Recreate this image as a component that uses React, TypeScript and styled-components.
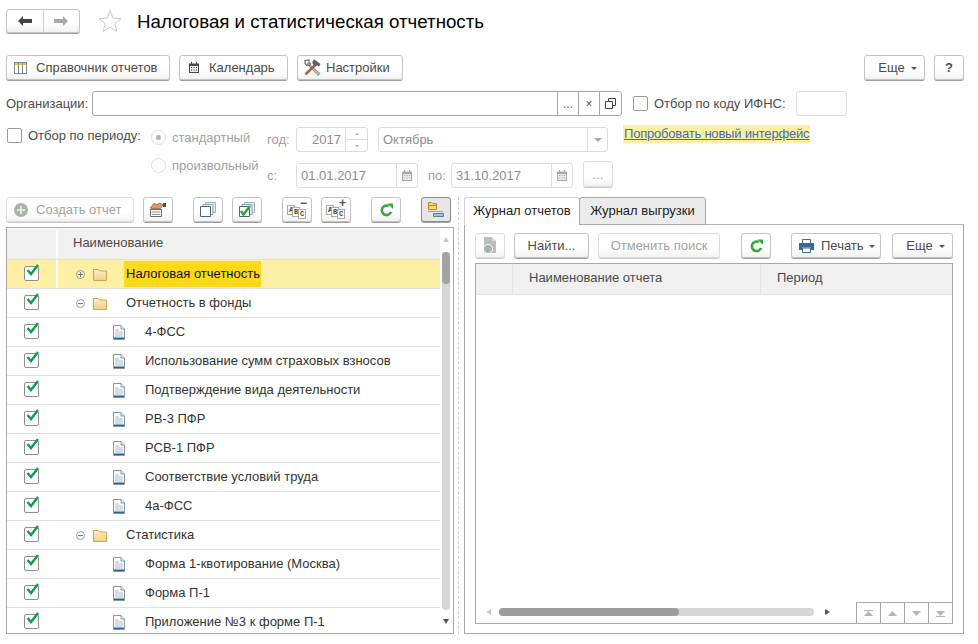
import React from 'react'
import styled, { createGlobalStyle, css } from 'styled-components'

const GlobalStyle = createGlobalStyle`
  html, body {
    margin: 0;
    padding: 0;
    background: #ffffff;
    overflow: hidden;
  }
  body {
    font-family: 'Liberation Sans', Arial, sans-serif;
    font-size: 13px;
    color: #4b4b4b;
  }
`

const colors = {
  border: '#a8a8a8',
  disabledBorder: '#dcdcdc',
  head: '#f0f0f0',
  line: '#e2e2e2',
  disabledText: '#a3a3a3',
  highlight: '#fdf0a4',
  link: '#3f6fae',
}

const ArrowIcon = ({ dir, color }: { dir: 'left' | 'right'; color: string }) => (
  <svg width='14' height='10' viewBox='0 0 14 10'>
    <path d={dir === 'left' ? 'M0 5l5-5v3h9v4H5v3z' : 'M14 5L9 0v3H0v4h9v3z'} fill={color} />
  </svg>
)

const StarIcon = () => (
  <svg width='24' height='24' viewBox='0 0 24 24'>
    <path
      d='M12 1.5l3 7.6 8 .5-6.200 5.100 2 7.800L12 18.200 5.200 22.500l2-7.800L1 9.600l8-.5z'
      fill='#fff'
      stroke='#c9c9c9'
    />
  </svg>
)

const TableIcon = () => (
  <svg width='13' height='12' viewBox='0 0 13 12'>
    <rect x='.5' y='.5' width='12' height='11' fill='#fff' stroke='#7d8c96' />
    <rect x='1' y='1' width='11' height='2' fill='#f2c230' />
    <path d='M4.500 1v10M8.500 1v10' stroke='#7d8c96' />
  </svg>
)

const CalendarIcon = ({ color = '#4a4a4a' }: { color?: string }) => (
  <svg width='10' height='11' viewBox='0 0 10 11'>
    <path d='M0 1.500h10V11H0z' fill={color} />
    <path d='M2 0h1v2H2zM7 0h1v2H7z' fill={color} />
    <path d='M1 4h8v6H1z' fill='#e8e8e8' />
    <path d='M2 5h1v1H2zM4.500 5h1v1h-1zM7 5h1v1H7zM2 7.500h1v1H2zM4.500 7.500h1v1h-1zM7 7.500h1v1H7z' fill={color} />
  </svg>
)

const ToolsIcon = () => (
  <svg width='17' height='17' viewBox='0 0 17 17'>
    <path d='M4 4l12 10.500-2 2L3 5z' fill='#b5b5b5' stroke='#666' strokeWidth='.6' />
    <path d='M11 4.500L1 14.500 2.500 16 12.500 6z' fill='#b0662a' stroke='#6a4420' strokeWidth='.5' />
    <path d='M8.500 2l2-1.500 6 4.500-1.500 2.500-2-1-1.500 1-3-3z' fill='#5f5f5f' />
    <path d='M1 1.500v3l2 2h2.500l1-1.500-1.500-1V1z' fill='none' stroke='#6f6f6f' strokeWidth='1.200' />
  </svg>
)

const CreateIcon = () => (
  <svg width='14' height='14' viewBox='0 0 14 14'>
    <circle cx='7' cy='7' r='7' fill='#a9b5a9' />
    <path d='M6 3h2v3h3v2H8v3H6V8H3V6h3z' fill='#dfe5df' />
  </svg>
)

const HandshakeDocIcon = () => (
  <svg width='16' height='15' viewBox='0 0 16 15'>
    <path d='M.5 7.500h11v7H.5z' fill='#fff' stroke='#6b6b6b' />
    <path d='M2 10h8M2 12.500h8' stroke='#8a8a8a' />
    <path d='M0 6l4-4.500 3 1 3-1.500 3 2-2.500 3.500H2z' fill='#d89a62' stroke='#8a5a30' strokeWidth='.7' />
    <path d='M13 1h3v4h-3z' fill='#4f4f4f' />
  </svg>
)

const StackIcon = ({ checked }: { checked?: boolean }) => (
  <svg width='16' height='15' viewBox='0 0 16 15'>
    <path d='M5.500.5h10v10h-10z' fill='#e6ebef' stroke='#9fb0bc' />
    <path d='M3 2.500h10v10H3z' fill='#eef1f4' stroke='#8fa2b0' />
    <path d='M.5 4.500h10v10H.5z' fill='#fff' stroke='#48667e' />
    {checked && <path d='M2 9l2.500 3.500L11 4' fill='none' stroke='#2fa83c' strokeWidth='2.600' />}
  </svg>
)

const AbcText = styled.span<{ $left: number; $top: number }>`
  position: absolute;
  left: ${(p) => p.$left}px;
  top: ${(p) => p.$top}px;
  font-family: 'Liberation Mono', monospace;
  font-size: 7px;
  font-weight: bold;
  line-height: 8px;
  color: #444;
  background: #fff;
  border: 1px solid #aaa;
  padding: 0 1px;
`
const AbcBox = styled.span`
  position: relative;
  display: block;
  width: 20px;
  height: 20px;
`
const AbcSign = styled.span`
  position: absolute;
  right: 0;
  top: -2px;
  font-size: 12px;
  line-height: 10px;
  font-weight: bold;
  color: #555;
`
const AbcIcon = ({ sign }: { sign: string }) => (
  <AbcBox>
    <AbcText $left={0} $top={5}>
      A
    </AbcText>
    <AbcText $left={5} $top={7}>
      B
    </AbcText>
    <AbcText $left={11} $top={9}>
      C
    </AbcText>
    <AbcSign>{sign}</AbcSign>
  </AbcBox>
)

const RefreshIcon = () => (
  <svg width='13' height='14' viewBox='0 0 13 14'>
    <path d='M11 8.800A4.700 4.700 0 1 1 8.800 3.200' fill='none' stroke='#32a83e' strokeWidth='2.600' />
    <path d='M7.500 .5h5.500v5.500z' fill='#32a83e' />
  </svg>
)

const TreeModeIcon = () => (
  <svg width='16' height='15' viewBox='0 0 16 15'>
    <path d='M.5 .5h3l1 1h4v6h-8z' fill='#f7d67a' stroke='#c08a1e' />
    <path d='M.5 3.500h8' stroke='#c08a1e' />
    <path d='M0 9.500h15' stroke='#d8a030' />
    <path d='M5.500 11.500h10v3h-10z' fill='#9fc1e0' stroke='#5c7f9c' />
  </svg>
)

const AddDocIcon = () => (
  <svg width='14' height='17' viewBox='0 0 14 17'>
    <path d='M1 0h8l4 4v12H1z' fill='#b9bdbd' />
    <path d='M9 0l4 4H9z' fill='#dcdcdc' />
    <circle cx='5' cy='12' r='4.500' fill='#a5b3a5' stroke='#fff' />
  </svg>
)

const PrintIcon = () => (
  <svg width='15' height='14' viewBox='0 0 15 14'>
    <path d='M3.500.5h8v4h-8z' fill='#fff' stroke='#3c6a90' />
    <path d='M0 4h15v7h-3V8.500H3V11H0z' fill='#3c6a90' />
    <path d='M3.500 9h8v4.500h-8z' fill='#fff' stroke='#3c6a90' />
  </svg>
)

const FolderIcon = () => (
  <svg width='14' height='13' viewBox='0 0 14 13'>
    <defs>
      <linearGradient id='folderFill' x1='0' y1='0' x2='0' y2='1'>
        <stop offset='0' stopColor='#fdf0c4' />
        <stop offset='1' stopColor='#f2cf80' />
      </linearGradient>
    </defs>
    <path d='M.5 1.500h5l1.500 1.500h6.500v9.500H.5z' fill='url(#folderFill)' stroke='#c9a45a' />
  </svg>
)

const DocIcon = () => (
  <svg width='12' height='15' viewBox='0 0 12 15'>
    <path d='M.5.500h7.500l3.500 3.500v10.500H.5z' fill='#fff' stroke='#7f97ad' />
    <path d='M8 .5V4h3.500' fill='#dfe6ec' stroke='#7f97ad' />
    <path d='M2 5h4M2 7h8M2 9h8M2 11h8' stroke='#a9bccb' />
    <path d='M1 12.500h10V14H1z' fill='#2f5f86' />
  </svg>
)

const PagerIcon = ({ kind }: { kind: 'first' | 'prev' | 'next' | 'last' }) => {
  const shapes = {
    first: 'M0 0h9v1H0zM4.500 1L9 6H0z',
    prev: 'M4.500 1L9 6H0z',
    next: 'M0 1h9L4.500 6z',
    last: 'M0 1h9L4.500 6zM0 6h9v1H0z',
  }
  return (
    <svg width='9' height='7' viewBox='0 0 9 7'>
      <path d={shapes[kind]} fill='#b4b4b4' />
    </svg>
  )
}

const OpenIcon = () => (
  <svg width='11' height='11' viewBox='0 0 11 11'>
    <path d='M3.500.5h7v7h-7z' fill='none' stroke='#444' />
    <path d='M.5 3.500h7v7h-7z' fill='#fff' stroke='#444' />
  </svg>
)

const buttonDisabled = css`
  color: ${colors.disabledText};
  border-color: ${colors.disabledBorder};
  box-shadow: 0 1px 0 #c8c8c8;
`

const Button = styled.button<{ $width: number; $disabled?: boolean; $pressed?: boolean }>`
  box-sizing: border-box;
  display: flex;
  flex: none;
  align-items: center;
  justify-content: center;
  gap: 10px;
  width: ${(p) => p.$width}px;
  height: 25px;
  padding: 0;
  font: inherit;
  color: #4b4b4b;
  background: linear-gradient(#ffffff 60%, #f2f2f2);
  border: 1px solid #c4c4c4;
  border-radius: 3px;
  box-shadow: 0 1px 0 #9d9d9d;
  ${(p) => p.$disabled && buttonDisabled}
  ${(p) =>
    p.$pressed &&
    css`
      background: #e6e6e6;
      border-color: #8c8c8c;
    `}
`
const Caret = styled.span`
  width: 0;
  height: 0;
  margin-left: -2px;
  margin-top: 2px;
  border-left: 3px solid transparent;
  border-right: 3px solid transparent;
  border-top: 3px solid #555;
`

const Page = styled.div`
  box-sizing: border-box;
  width: 978px;
  height: 644px;
  padding: 9px 14px 0 6px;
  display: flex;
  flex-direction: column;
`
const Header = styled.div`
  display: flex;
  align-items: center;
  height: 24px;
  margin-bottom: 22px;
`
const NavGroup = styled.div`
  box-sizing: border-box;
  display: flex;
  width: 74px;
  height: 24px;
  border: 1px solid #c4c4c4;
  border-radius: 3px;
  box-shadow: 0 1px 0 #9d9d9d;
  background: linear-gradient(#ffffff 60%, #f2f2f2);
`
const NavCell = styled.div<{ $divider?: boolean }>`
  flex: 1;
  display: flex;
  align-items: center;
  justify-content: center;
  ${(p) => p.$divider && `border-left: 1px solid #d0d0d0;`}
`
const StarSlot = styled.div`
  display: flex;
  margin: 0 15px 0 18px;
`
const Title = styled.h1`
  margin: 0;
  padding-top: 2px;
  font-size: 18.7px;
  font-weight: normal;
  color: #000;
`
const CommandBar = styled.div`
  display: flex;
  gap: 9px;
  height: 26px;
  margin-bottom: 10px;
`
const Spacer = styled.div`
  flex: 1;
`
const CommandButton = styled(Button)<{ $pad: number; $gap: number }>`
  justify-content: flex-start;
  padding-left: ${(p) => p.$pad}px;
  gap: ${(p) => p.$gap}px;
`
const MoreButton = styled(Button)`
  gap: 8px;
  padding-left: 6px;
`
const Row = styled.div`
  display: flex;
  align-items: center;
  height: 25px;
`
const OrgRow = styled(Row)`
  margin-bottom: 11px;
`
const Label = styled.span<{ $muted?: boolean; $width?: number; $left?: number }>`
  flex: none;
  white-space: nowrap;
  ${(p) => p.$width !== undefined && `width: ${p.$width}px;`}
  margin-left: ${(p) => p.$left ?? 0}px;
  color: ${(p) => (p.$muted ? '#a0a0a0' : '#4b4b4b')};
`
const InputShell = styled.div<{ $width: number; $disabled?: boolean; $left?: number }>`
  box-sizing: border-box;
  display: flex;
  flex: none;
  width: ${(p) => p.$width}px;
  height: 25px;
  margin-left: ${(p) => p.$left ?? 0}px;
  border: 1px solid ${(p) => (p.$disabled ? colors.disabledBorder : colors.border)};
  border-radius: 3px;
  background: #fff;
  color: #8d8d8d;
`
const InputValue = styled.div<{ $right?: boolean }>`
  flex: 1;
  display: flex;
  align-items: center;
  padding: 0 4px;
  ${(p) => p.$right && `justify-content: flex-end;`}
`
const InputCell = styled.div<{ $width: number; $disabled?: boolean }>`
  box-sizing: border-box;
  flex: none;
  display: flex;
  align-items: center;
  justify-content: center;
  width: ${(p) => p.$width}px;
  border-left: 1px solid ${(p) => (p.$disabled ? colors.disabledBorder : colors.border)};
  color: #555;
  font-size: 12px;
`
const Check = styled.span<{ $left?: number; $right?: number }>`
  box-sizing: border-box;
  flex: none;
  display: block;
  width: 15px;
  height: 15px;
  border: 1px solid #9a9a9a;
  border-radius: 2px;
  background: #fff;
  margin-left: ${(p) => p.$left ?? 0}px;
  margin-right: ${(p) => p.$right ?? 0}px;
`
const PeriodArea = styled.div`
  display: flex;
  height: 60px;
  margin-bottom: 10px;
`
const PeriodLabel = styled.div`
  display: flex;
  flex: none;
  align-items: flex-start;
  width: 144px;
  padding: 1px 0 0 1px;
  line-height: 15px;
`
const RadioColumn = styled.div`
  flex: none;
  width: 116px;
  padding-top: 3px;
  display: flex;
  flex-direction: column;
  gap: 13px;
`
const RadioRow = styled.div`
  display: flex;
  align-items: center;
  gap: 6px;
  height: 15px;
  color: #a0a0a0;
`
const Radio = styled.span<{ $on?: boolean }>`
  box-sizing: border-box;
  width: 15px;
  height: 15px;
  border: 1px solid ${colors.disabledBorder};
  border-radius: 50%;
  display: flex;
  align-items: center;
  justify-content: center;
  &::after {
    content: '';
    width: 5px;
    height: 5px;
    border-radius: 50%;
    background: ${(p) => (p.$on ? '#b0b0b0' : 'transparent')};
  }
`
const PeriodFields = styled.div`
  display: flex;
  flex-direction: column;
  gap: 11px;
`
const FieldRow = styled.div`
  display: flex;
  align-items: center;
  height: 25px;
`
const SpinColumn = styled.div`
  flex: none;
  width: 21px;
  display: flex;
  flex-direction: column;
  border-left: 1px solid ${colors.disabledBorder};
`
const SpinCell = styled.div<{ $top?: boolean }>`
  flex: 1;
  height: 11px;
  display: flex;
  align-items: center;
  justify-content: center;
  ${(p) => p.$top && `border-bottom: 1px solid ${colors.disabledBorder};`}
`
const SpinArrow = styled.span<{ $up?: boolean }>`
  width: 0;
  height: 0;
  border-left: 2px solid transparent;
  border-right: 2px solid transparent;
  ${(p) => (p.$up ? `border-bottom: 2px solid #aaa;` : `border-top: 2px solid #aaa;`)}
`
const GreyCaret = styled(Caret)`
  margin: 0;
  border-left-width: 4px;
  border-right-width: 4px;
  border-top: 4px solid #aaa;
`
const TryLink = styled.a`
  display: block;
  align-self: flex-start;
  margin: -2px 0 0 15px;
  height: 18px;
  line-height: 18px;
  padding: 0 1px;
  background: ${colors.highlight};
  color: ${colors.link};
  text-decoration: underline;
  white-space: nowrap;
  letter-spacing: -0.2px;
`
const DotsButton = styled(Button)`
  margin: -3px 0 0 10px;
  height: 26px;
`
const Main = styled.div`
  display: flex;
  align-items: stretch;
  height: 437px;
`
const LeftColumn = styled.div`
  display: flex;
  flex: none;
  flex-direction: column;
  width: 448px;
`
const Toolbar = styled.div`
  display: flex;
  align-items: flex-start;
  height: 30px;
`
const ToolButton = styled(Button)<{ $gap?: number }>`
  margin-right: ${(p) => p.$gap ?? 9}px;
`
const LabelledToolButton = styled(ToolButton)<{ $inner: number }>`
  justify-content: flex-start;
  padding-left: 7px;
  gap: ${(p) => p.$inner}px;
`
const Tree = styled.div`
  position: relative;
  box-sizing: border-box;
  height: 407px;
  border: 1px solid ${colors.border};
  overflow: hidden;
`
const TreeHead = styled.div`
  display: grid;
  grid-template-columns: 49px 1fr;
  column-gap: 2px;
  height: 30px;
  margin: 1px 13px 0 0;
  border-bottom: 1px solid ${colors.line};
`
const HeadCell = styled.div<{ $pad?: number }>`
  display: flex;
  align-items: center;
  background: ${colors.head};
  padding-left: ${(p) => p.$pad ?? 0}px;
  padding-bottom: 3px;
`
const TreeRow = styled.div<{ $active?: boolean }>`
  box-sizing: border-box;
  display: grid;
  grid-template-columns: 49px 1fr;
  column-gap: 2px;
  height: 29px;
  margin-right: 13px;
  border-bottom: 1px solid ${colors.line};
  color: #333;
  ${(p) =>
    p.$active &&
    css`
      background: linear-gradient(90deg, ${colors.highlight} 49px, #fff 49px, #fff 51px, ${colors.highlight} 51px);
      color: #111;
    `}
`
const CheckCell = styled.div`
  display: flex;
  align-items: center;
  padding: 0 0 2px 17px;
`
const CheckMark = styled.span`
  position: relative;
  display: block;
  width: 15px;
  height: 15px;
  box-sizing: border-box;
  border: 1px solid #8d8d8d;
  border-radius: 2px;
  background: #fff;
`
const CheckStroke = styled.svg`
  position: absolute;
  left: 1px;
  top: -4px;
`
const NameCell = styled.div<{ $indent: number }>`
  display: flex;
  align-items: center;
  padding-left: ${(p) => p.$indent}px;
`
const Expander = styled.span`
  box-sizing: border-box;
  flex: none;
  position: relative;
  width: 9px;
  height: 9px;
  border: 1px solid #9c9c9c;
  border-radius: 50%;
  margin-right: 8px;
  font-size: 0;
`
const ExpanderLine = styled.span<{ $vertical?: boolean }>`
  position: absolute;
  background: #777;
  ${(p) =>
    p.$vertical
      ? `left: 3px; top: 1px; width: 1px; height: 5px;`
      : `left: 1px; top: 3px; width: 5px; height: 1px;`}
`
const NodeIcon = styled.span<{ $gap: number }>`
  display: flex;
  flex: none;
  margin-right: ${(p) => p.$gap}px;
`
const Name = styled.span<{ $mark?: boolean }>`
  line-height: 26px;
  white-space: nowrap;
  ${(p) =>
    p.$mark &&
    css`
      display: block;
      margin-left: -2px;
      padding: 0 1px 0 2px;
      background: #fcd91a;
    `}
`
const VScroll = styled.div`
  position: absolute;
  top: 0;
  right: 0;
  bottom: 0;
  width: 13px;
  background: #fff;
`
const VTrack = styled.div`
  position: absolute;
  left: 2px;
  top: 24px;
  width: 8px;
  height: 358px;
  border-radius: 4px;
  background: #d6d6d6;
`
const VThumb = styled.div`
  width: 8px;
  height: 32px;
  border-radius: 4px;
  background: #a3a3a3;
`
const ScrollArrow = styled.span<{ $dir: 'up' | 'down' | 'left' | 'right'; $dim?: boolean }>`
  position: absolute;
  width: 0;
  height: 0;
  ${(p) => {
    const c = p.$dim ? '#c8c8c8' : '#555'
    if (p.$dir === 'up') return `left: 3px; top: 9px; border: 3px solid transparent; border-top: 0; border-bottom: 5px solid ${c};`
    if (p.$dir === 'down') return `left: 3px; bottom: 9px; border: 3px solid transparent; border-bottom: 0; border-top: 5px solid ${c};`
    if (p.$dir === 'left') return `left: 10px; bottom: 8px; border: 3px solid transparent; border-left: 0; border-right: 5px solid ${c};`
    return `left: 349px; bottom: 8px; border: 3px solid transparent; border-right: 0; border-left: 5px solid ${c};`
  }}
`
const Splitter = styled.div`
  flex: none;
  width: 0;
  margin: 0 5px 0 4px;
  border-left: 1px dashed #d0d0d0;
`
const RightColumn = styled.div`
  display: flex;
  flex: none;
  flex-direction: column;
  width: 500px;
`
const Tabs = styled.div`
  display: flex;
  height: 28px;
  margin-bottom: -1px;
  position: relative;
  z-index: 1;
`
const Tab = styled.div<{ $active?: boolean; $width: number }>`
  box-sizing: border-box;
  display: flex;
  align-items: center;
  justify-content: center;
  width: ${(p) => p.$width}px;
  padding-bottom: 1px;
  color: #222;
  border: 1px solid ${colors.border};
  border-radius: 3px 3px 0 0;
  ${(p) =>
    p.$active
      ? `background: #fff; border-color: #d0d0d0; border-bottom-color: #fff; border-right-color: ${colors.border};`
      : `background: #ececec; margin-left: -1px;`}
`
const TabPanel = styled.div`
  box-sizing: border-box;
  height: 410px;
  padding: 8px 10px 9px 10px;
  border: 1px solid ${colors.border};
  border-top-color: #b5b5b5;
`
const JournalToolbar = styled.div`
  display: flex;
  height: 30px;
  align-items: flex-start;
`
const Grid = styled.div`
  position: relative;
  box-sizing: border-box;
  height: 361px;
  border: 1px solid ${colors.border};
`
const GridHead = styled.div`
  display: grid;
  grid-template-columns: 36px 247px 1fr;
  column-gap: 1px;
  height: 30px;
  border-bottom: 1px solid ${colors.line};
  background: #e2e2e2;
`
const HScroll = styled.div`
  position: absolute;
  left: 0;
  bottom: 0;
  width: 368px;
  height: 22px;
`
const HTrack = styled.div`
  position: absolute;
  left: 23px;
  top: 7px;
  width: 315px;
  height: 8px;
  border-radius: 4px;
  background: #d6d6d6;
`
const HThumb = styled.div`
  width: 180px;
  height: 8px;
  border-radius: 4px;
  background: #9c9c9c;
`
const Pager = styled.div`
  position: absolute;
  right: 0;
  bottom: 0;
  display: flex;
  background: #fff;
  border-top: 1px solid ${colors.border};
  border-left: 1px solid ${colors.border};
`
const PagerCell = styled.div<{ $first?: boolean }>`
  box-sizing: border-box;
  display: flex;
  align-items: center;
  justify-content: center;
  width: ${(p) => (p.$first ? 23 : 24)}px;
  height: 20px;
  ${(p) => !p.$first && `border-left: 1px solid ${colors.border};`}
`

type Item = { name: string; kind: 'open' | 'closed' | 'leaf'; active?: boolean }

const items: Item[] = [
  { name: 'Налоговая отчетность', kind: 'closed', active: true },
  { name: 'Отчетность в фонды', kind: 'open' },
  { name: '4-ФСС', kind: 'leaf' },
  { name: 'Использование сумм страховых взносов', kind: 'leaf' },
  { name: 'Подтверждение вида деятельности', kind: 'leaf' },
  { name: 'РВ-3 ПФР', kind: 'leaf' },
  { name: 'РСВ-1 ПФР', kind: 'leaf' },
  { name: 'Соответствие условий труда', kind: 'leaf' },
  { name: '4а-ФСС', kind: 'leaf' },
  { name: 'Статистика', kind: 'open' },
  { name: 'Форма 1-квотирование (Москва)', kind: 'leaf' },
  { name: 'Форма П-1', kind: 'leaf' },
  { name: 'Приложение №3 к форме П-1', kind: 'leaf' },
]

const TreeNode = ({ item }: { item: Item }) => (
  <TreeRow $active={item.active}>
    <CheckCell>
      <CheckMark>
        <CheckStroke width='14' height='14' viewBox='0 0 14 14'>
          <path d='M1.500 7l3.500 4L12 2' fill='none' stroke='#0f9d4a' strokeWidth='2.400' />
        </CheckStroke>
      </CheckMark>
    </CheckCell>
    <NameCell $indent={item.kind === 'leaf' ? 55 : 18}>
      {item.kind !== 'leaf' && (
        <Expander>
          <ExpanderLine />
          {item.kind === 'closed' && <ExpanderLine $vertical />}
        </Expander>
      )}
      <NodeIcon $gap={item.kind === 'leaf' ? 20 : 19}>
        {item.kind === 'leaf' ? <DocIcon /> : <FolderIcon />}
      </NodeIcon>
      <Name $mark={item.active}>{item.name}</Name>
    </NameCell>
  </TreeRow>
)

export default function App() {
  return (
    <Page>
      <GlobalStyle />
      <Header>
        <NavGroup>
          <NavCell>
            <ArrowIcon dir='left' color='#444' />
          </NavCell>
          <NavCell $divider>
            <ArrowIcon dir='right' color='#a8a8a8' />
          </NavCell>
        </NavGroup>
        <StarSlot>
          <StarIcon />
        </StarSlot>
        <Title>Налоговая и статистическая отчетность</Title>
      </Header>

      <CommandBar>
        <CommandButton $width={164} $pad={7} $gap={9}>
          <TableIcon />
          Справочник отчетов
        </CommandButton>
        <CommandButton $width={109} $pad={9} $gap={10}>
          <CalendarIcon />
          Календарь
        </CommandButton>
        <CommandButton $width={106} $pad={6} $gap={5}>
          <ToolsIcon />
          Настройки
        </CommandButton>
        <Spacer />
        <MoreButton $width={61}>
          Еще
          <Caret />
        </MoreButton>
        <Button $width={30}>
          <b>?</b>
        </Button>
      </CommandBar>

      <OrgRow>
        <Label $width={86}>Организации:</Label>
        <InputShell $width={530}>
          <InputValue />
          <InputCell $width={21}>...</InputCell>
          <InputCell $width={21}>×</InputCell>
          <InputCell $width={22}>
            <OpenIcon />
          </InputCell>
        </InputShell>
        <Check $left={11} $right={6} />
        <Label $width={142}>Отбор по коду ИФНС:</Label>
        <InputShell $width={51} $disabled />
      </OrgRow>

      <PeriodArea>
        <PeriodLabel>
          <Check $right={6} />
          Отбор по периоду:
        </PeriodLabel>
        <RadioColumn>
          <RadioRow>
            <Radio $on />
            стандартный
          </RadioRow>
          <RadioRow>
            <Radio />
            произвольный
          </RadioRow>
        </RadioColumn>
        <PeriodFields>
          <FieldRow>
            <Label $muted $width={29}>
              год:
            </Label>
            <InputShell $width={72} $disabled>
              <InputValue $right>2017</InputValue>
              <SpinColumn>
                <SpinCell $top>
                  <SpinArrow $up />
                </SpinCell>
                <SpinCell>
                  <SpinArrow />
                </SpinCell>
              </SpinColumn>
            </InputShell>
            <InputShell $width={230} $disabled $left={10}>
              <InputValue>Октябрь</InputValue>
              <InputCell $width={20} $disabled>
                <GreyCaret />
              </InputCell>
            </InputShell>
            <TryLink>Попробовать новый интерфейс</TryLink>
          </FieldRow>
          <FieldRow>
            <Label $muted $width={29}>
              с:
            </Label>
            <InputShell $width={122} $disabled>
              <InputValue>01.01.2017</InputValue>
              <InputCell $width={21} $disabled>
                <CalendarIcon color='#a8a8a8' />
              </InputCell>
            </InputShell>
            <Label $muted $width={23} $left={10}>
              по:
            </Label>
            <InputShell $width={122} $disabled>
              <InputValue>31.10.2017</InputValue>
              <InputCell $width={21} $disabled>
                <CalendarIcon color='#a8a8a8' />
              </InputCell>
            </InputShell>
            <DotsButton $width={30} $disabled>
              ...
            </DotsButton>
          </FieldRow>
        </PeriodFields>
      </PeriodArea>

      <Main>
        <LeftColumn>
          <Toolbar>
            <LabelledToolButton $width={128} $disabled $inner={8}>
              <CreateIcon />
              Создать отчет
            </LabelledToolButton>
            <ToolButton $width={30} $gap={20}>
              <HandshakeDocIcon />
            </ToolButton>
            <ToolButton $width={30}>
              <StackIcon />
            </ToolButton>
            <ToolButton $width={30} $gap={20}>
              <StackIcon checked />
            </ToolButton>
            <ToolButton $width={30}>
              <AbcIcon sign='−' />
            </ToolButton>
            <ToolButton $width={30} $gap={20}>
              <AbcIcon sign='+' />
            </ToolButton>
            <ToolButton $width={30} $gap={20}>
              <RefreshIcon />
            </ToolButton>
            <ToolButton $width={30} $pressed $gap={0}>
              <TreeModeIcon />
            </ToolButton>
          </Toolbar>
          <Tree>
            <TreeHead>
              <HeadCell />
              <HeadCell $pad={15}>Наименование</HeadCell>
            </TreeHead>
            {items.map((item) => (
              <TreeNode key={item.name} item={item} />
            ))}
            <VScroll>
              <ScrollArrow $dir='up' $dim />
              <VTrack>
                <VThumb />
              </VTrack>
              <ScrollArrow $dir='down' />
            </VScroll>
          </Tree>
        </LeftColumn>

        <Splitter />

        <RightColumn>
          <Tabs>
            <Tab $active $width={116}>
              Журнал отчетов
            </Tab>
            <Tab $width={127}>Журнал выгрузки</Tab>
          </Tabs>
          <TabPanel>
            <JournalToolbar>
              <ToolButton $width={30} $disabled>
                <AddDocIcon />
              </ToolButton>
              <ToolButton $width={75}>Найти...</ToolButton>
              <ToolButton $width={122} $disabled $gap={21}>
                Отменить поиск
              </ToolButton>
              <ToolButton $width={30} $gap={20}>
                <RefreshIcon />
              </ToolButton>
              <LabelledToolButton $width={90} $gap={11} $inner={7}>
                <PrintIcon />
                Печать
                <Caret />
              </LabelledToolButton>
              <MoreButton $width={61}>
                Еще
                <Caret />
              </MoreButton>
            </JournalToolbar>
            <Grid>
              <GridHead>
                <HeadCell />
                <HeadCell $pad={16}>Наименование отчета</HeadCell>
                <HeadCell $pad={16}>Период</HeadCell>
              </GridHead>
              <HScroll>
                <ScrollArrow $dir='left' $dim />
                <HTrack>
                  <HThumb />
                </HTrack>
                <ScrollArrow $dir='right' />
              </HScroll>
              <Pager>
                <PagerCell $first>
                  <PagerIcon kind='first' />
                </PagerCell>
                <PagerCell>
                  <PagerIcon kind='prev' />
                </PagerCell>
                <PagerCell>
                  <PagerIcon kind='next' />
                </PagerCell>
                <PagerCell>
                  <PagerIcon kind='last' />
                </PagerCell>
              </Pager>
            </Grid>
          </TabPanel>
        </RightColumn>
      </Main>
    </Page>
  )
}
